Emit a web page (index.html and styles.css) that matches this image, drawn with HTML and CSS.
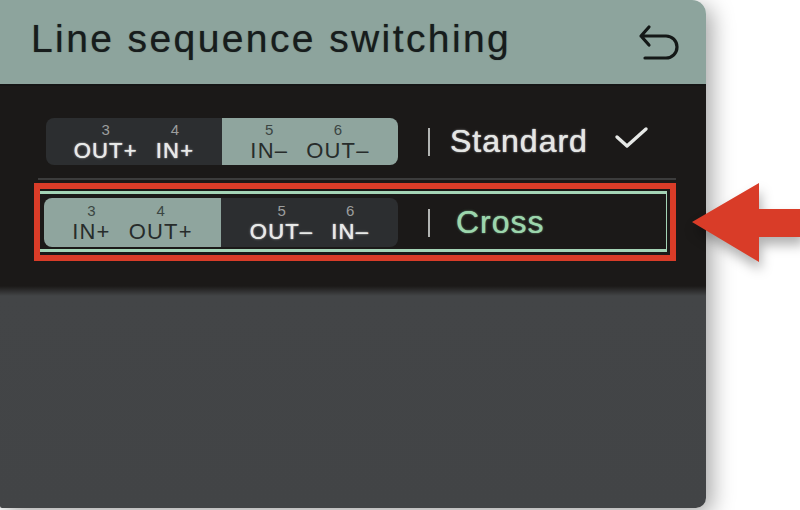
FILE: index.html
```html
<!DOCTYPE html>
<html lang="en">

<head>
  <meta charset="UTF-8">
  <meta name="viewport" content="width=device-width, initial-scale=1.0">
  <title>Line sequence switching</title>
  <link rel="stylesheet" href="styles.css">
</head>

<body>
  <div class="screen">
    <div class="header">
      <span class="title">Line sequence switching</span>
      <svg class="back" width="44" height="40" viewBox="0 0 44 40">
        <path d="M11 5 L3 14 L11 23 M3 14 H28 A11 11 0 0 1 28 36 H7" fill="none" stroke="#141817" stroke-width="3.2" stroke-linecap="round" stroke-linejoin="round"/>
      </svg>
    </div>

    <div class="main">
      <div class="row">
        <div class="pill">
          <div class="half dark">
            <div class="pin"><span class="num">3</span><span class="lbl">OUT+</span></div>
            <div class="pin"><span class="num">4</span><span class="lbl">IN+</span></div>
          </div>
          <div class="half light">
            <div class="pin"><span class="num">5</span><span class="lbl">IN–</span></div>
            <div class="pin"><span class="num">6</span><span class="lbl">OUT–</span></div>
          </div>
        </div>
        <span class="bar"></span>
        <span class="name">Standard</span>
        <svg class="check" width="36" height="26" viewBox="0 0 36 26">
          <path d="M3 12 L13 21 L32 4" fill="none" stroke="#e6e8e6" stroke-width="3.4" stroke-linecap="round" stroke-linejoin="round"/>
        </svg>
      </div>

      <div class="sep"></div>

      <div class="annot">
        <div class="row selected">
          <div class="pill">
            <div class="half light">
              <div class="pin"><span class="num">3</span><span class="lbl">IN+</span></div>
              <div class="pin"><span class="num">4</span><span class="lbl">OUT+</span></div>
            </div>
            <div class="half dark">
              <div class="pin"><span class="num">5</span><span class="lbl">OUT–</span></div>
              <div class="pin"><span class="num">6</span><span class="lbl">IN–</span></div>
            </div>
          </div>
          <span class="bar"></span>
          <span class="name green">Cross</span>
        </div>
      </div>
    </div>
  </div>

  <svg class="pointer" width="110" height="90" viewBox="0 0 110 90">
    <polygon points="0,40 67,1 67,27 110,27 110,55 67,55 67,80" fill="#d93c28"/>
  </svg>
</body>

</html>
```

FILE: styles.css
```css
body {
  margin: 0;
  background: #fff;
  font-family: "Liberation Sans", Arial, sans-serif;
  position: relative;
  height: 510px;
  overflow: hidden;
}
.screen {
  width: 706px;
  height: 508px;
  display: flex;
  flex-direction: column;
  border-radius: 0 14px 10px 2px;
  overflow: hidden;
  box-shadow: 6px 6px 22px rgba(0, 0, 0, 0.35);
}
.header {
  height: 86px;
  flex-shrink: 0;
  background: #8da49d;
  border-bottom: 2px solid #151515;
  display: flex;
  align-items: center;
  justify-content: space-between;
  padding: 0 24px 6px 31px;
  box-sizing: border-box;
}
.title {
  font-size: 39px;
  letter-spacing: 2.4px;
  color: #171c1c;
  text-shadow: 0 0 1px rgba(20, 25, 25, 0.6);
}
.back {
  display: block;
  margin-top: 6px;
}
.main {
  flex: 1;
  background: linear-gradient(#1b1918 0, #1b1918 200px, #434547 210px, #424446 100%);
  padding: 32px 30px 0 34px;
}
.row {
  display: flex;
  align-items: center;
  padding-left: 12px;
  height: 47px;
}
.pill {
  display: flex;
  width: 352px;
  height: 47px;
  border-radius: 8px;
  overflow: hidden;
  flex-shrink: 0;
}
.half {
  width: 176px;
  display: flex;
  justify-content: center;
  gap: 18px;
  align-items: center;
}
.dark {
  background: #2c2e30;
  color: #e8eae8;
}
.light {
  background: #8fa59e;
  color: #272c2b;
}
.pin {
  display: flex;
  flex-direction: column;
  align-items: center;
  line-height: 1;
}
.num {
  font-size: 15px;
  margin-bottom: 3px;
}
.dark .num {
  color: #9c9e9e;
}
.light .num {
  color: #3b4543;
}
.lbl {
  font-size: 22px;
  letter-spacing: 1.2px;
}
.dark .lbl {
  text-shadow: 0 0 1px #fff, 0 0 3px rgba(255, 255, 255, 0.35);
}
.bar {
  width: 2px;
  height: 28px;
  background: #b2b4b2;
  margin-left: 30px;
  flex-shrink: 0;
}
.name {
  font-size: 32px;
  letter-spacing: 1px;
  color: #e4e6e4;
  margin-left: 20px;
  text-shadow: 0 0 1px #fff, 0 0 3px rgba(255, 255, 255, 0.3);
}
.name.green {
  color: #9bd6ac;
  margin-left: 26px;
  text-shadow: 0 0 1px #9bd6ac, 0 0 3px rgba(150, 220, 170, 0.35);
}
.check {
  margin-left: auto;
  margin-right: 26px;
  margin-top: -8px;
}
.sep {
  height: 2px;
  background: #3c3c3c;
  margin: 13px 0 3px 4px;
}
.annot {
  border: 6px solid #d93c28;
}
.row.selected {
  margin: 2px 3px 3px 0;
  padding: 4px 0 2px 4px;
  height: 49px;
  border-top: 3px solid #a4d4b6;
  border-bottom: 3px solid #a4d4b6;
  border-right: 1px solid #a4d4b6;
  background: #1b1918;
}
.selected .pill {
  width: 354px;
  height: 49px;
}
.selected .half {
  width: 177px;
}
.pointer {
  position: absolute;
  left: 692px;
  top: 182px;
  filter: drop-shadow(2px 8px 6px rgba(0, 0, 0, 0.3));
}
```
